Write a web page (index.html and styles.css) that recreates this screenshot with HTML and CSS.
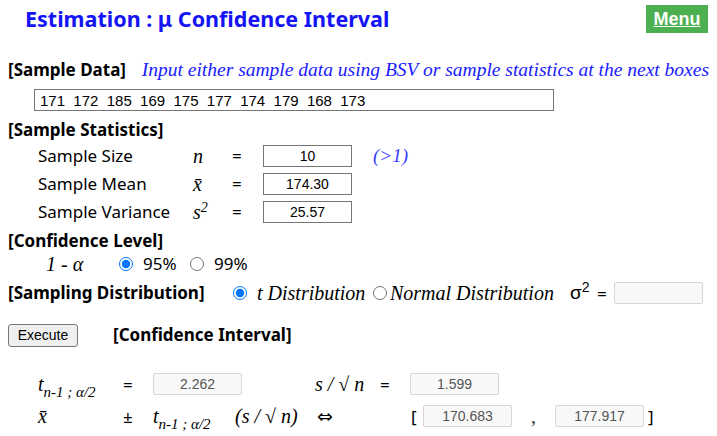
FILE: index.html
```html
<!DOCTYPE html>
<html>
<head>
<meta charset="utf-8">
<link rel="stylesheet" href="styles.css">
</head>
<body>
<div class="top">
  <h1 class="title">Estimation : μ Confidence Interval</h1>
  <a class="menu" href="#">Menu</a>
</div>

<div class="head-row">
  <span class="sec w-data">[Sample Data]</span>
  <span class="note">Input either sample data using BSV or sample statistics at the next boxes</span>
</div>
<div class="data-row">
  <input class="data" type="text" value="171  172  185  169  175  177  174  179  168  173">
</div>

<div class="sec sec-stats">[Sample Statistics]</div>
<div class="stats">
  <span class="lbl">Sample Size</span><span class="sym">n</span><span class="eq">=</span><input class="box" type="text" value="10"><span class="hint">(&gt;1)</span>
  <span class="lbl">Sample Mean</span><span class="sym">x̄</span><span class="eq">=</span><input class="box" type="text" value="174.30"><span></span>
  <span class="lbl">Sample Variance</span><span class="sym">s<sup>2</sup></span><span class="eq">=</span><input class="box" type="text" value="25.57"><span></span>
</div>

<div class="sec sec-conf">[Confidence Level]</div>
<div class="conf">
  <span class="sym alpha">1 - α</span>
  <label class="opt o95"><input type="radio" name="cl" checked>95%</label>
  <label class="opt"><input type="radio" name="cl">99%</label>
</div>

<div class="dist">
  <span class="sec w-dist">[Sampling Distribution]</span>
  <label class="dopt d1"><input type="radio" name="sd" checked><i>t Distribution</i></label>
  <label class="dopt d2"><input type="radio" name="sd"><i>Normal Distribution</i></label>
  <span class="sigma">σ<sup>2</sup></span><span class="eq2">=</span>
  <input class="box ro" type="text" value="">
</div>

<div class="exec">
  <button class="btn" type="button">Execute</button>
  <span class="sec">[Confidence Interval]</span>
</div>

<div class="res r1">
  <span class="c1 sym">t<sub>n-1 ; α/2</sub></span>
  <span class="c2">=</span>
  <input class="box ro" type="text" value="2.262">
  <span class="c4 sym">s / √ n</span>
  <span class="c5">=</span>
  <input class="box ro" type="text" value="1.599">
</div>
<div class="res r2">
  <span class="c1 sym">x̄</span>
  <span class="c2">±</span>
  <span class="c3 sym">t<sub>n-1 ; α/2</sub></span>
  <span class="c6 sym">(s / √ n)</span>
  <span class="c7">⇔</span>
  <span class="lb">[</span>
  <input class="box ro" type="text" value="170.683">
  <span class="comma">,</span>
  <input class="box ro" type="text" value="177.917">
  <span class="rb">]</span>
</div>
</body>
</html>
```

FILE: styles.css
```css
html, body { margin: 0; padding: 0; }
body {
  width: 717px;
  height: 436px;
  overflow: hidden;
  background: #fff;
  color: #000;
  font-family: "Noto Sans", "Liberation Sans", sans-serif;
  font-size: 17px;
  padding: 0 8px;
  box-sizing: border-box;
}
input[type=radio] {
  margin: 0 6px 0 0;
  width: 14px;
  height: 14px;
  accent-color: #0075ff;
  flex: none;
}
.top {
  display: flex;
  justify-content: space-between;
  align-items: flex-start;
  height: 52px;
}
.title {
  margin: 4px 0 0 17px;
  font-size: 21.5px;
  font-weight: bold;
  color: #1414f5;
  line-height: 30px;
}
.menu {
  margin-top: 5px;
  margin-right: 1px;
  width: 62px;
  height: 28px;
  background: #4caf50;
  color: #fff;
  font-family: "Liberation Sans", Arial, sans-serif;
  font-weight: bold;
  font-size: 18px;
  line-height: 28px;
  text-align: center;
  text-decoration: underline;
}
.sec {
  font-weight: bold;
  font-size: 17px;
  line-height: 22px;
  white-space: nowrap;
}
.head-row {
  display: flex;
  align-items: center;
  height: 36px;
}
.w-data { width: 134px; }
.note {
  font-family: "Liberation Serif", "Times New Roman", serif;
  font-style: italic;
  font-size: 19.5px;
  color: #1a1aff;
  white-space: nowrap;
}
.data-row {
  padding-left: 26px;
  height: 29px;
}
.data {
  display: block;
  width: 520px;
  height: 22px;
  box-sizing: border-box;
  border: 1px solid #767676;
  font-family: "Liberation Sans", Arial, sans-serif;
  font-size: 15px;
  padding: 0 5px;
  color: #000;
  margin: 1px 0 0;
}
.sec-stats { display: block; height: 24px; line-height: 24px; }
.stats {
  display: grid;
  grid-template-columns: 155px 39px 31px 89px auto;
  grid-auto-rows: 28px;
  align-items: center;
  padding-left: 30px;
}
.lbl { font-size: 17px; line-height: 22px; }
.sym {
  font-family: "Liberation Serif", "Times New Roman", serif;
  font-style: italic;
  font-size: 20px;
  line-height: 22px;
}
.sym sup, .sigma sup { font-size: 14px; vertical-align: 7px; line-height: 0; }
.eq { font-size: 17px; line-height: 22px; }
.box {
  display: block;
  width: 89px;
  height: 22px;
  box-sizing: border-box;
  border: 1px solid #767676;
  text-align: center;
  font-family: "Liberation Sans", Arial, sans-serif;
  font-size: 14px;
  color: #000;
  padding: 0 2px;
  margin: 0;
  flex: none;
}
.hint {
  margin-left: 21px;
  font-family: "Liberation Serif", "Times New Roman", serif;
  font-style: italic;
  font-size: 19px;
  line-height: 22px;
  color: #3838ff;
}
.sec-conf { display: block; height: 24px; line-height: 24px; margin-top: 3px; }
.conf {
  display: flex;
  align-items: center;
  height: 22px;
  padding-left: 38px;
}
.alpha { width: 73px; }
.opt { display: flex; align-items: center; font-size: 17px; line-height: 22px; }
.opt input { margin-right: 10px; }
.o95 { width: 71px; }
.dist {
  display: flex;
  align-items: center;
  height: 36px;
}
.w-dist { width: 225px; }
.dopt {
  display: flex;
  align-items: center;
  font-family: "Liberation Serif", "Times New Roman", serif;
  font-size: 20px;
  line-height: 22px;
  white-space: nowrap;
}
.d1 { width: 140px; }
.d1 input { margin-right: 10px; }
.d2 { width: 197px; }
.d2 input { margin-right: 3px; }
.sigma {
  font-family: "Liberation Sans", Arial, sans-serif;
  font-size: 19px;
  line-height: 22px;
  width: 27px;
}
.eq2 { width: 17px; font-size: 17px; }
.ro {
  background: #f8f8f8;
  border: 1px solid #d6d6d6;
  border-radius: 2px;
  color: #555;
}
.exec {
  display: flex;
  align-items: center;
  margin-top: 12px;
  height: 24px;
}
.btn {
  width: 70px;
  height: 23px;
  font-family: "Liberation Sans", Arial, sans-serif;
  font-size: 14px;
  background: #efefef;
  border: 1px solid #767676;
  border-radius: 3px;
  padding: 0;
  margin-right: 35px;
}
.res {
  display: flex;
  align-items: center;
  height: 32px;
  padding-left: 30px;
  white-space: nowrap;
}
.r1 { margin-top: 21px; }
.res .c1 { width: 85px; }
.res .c2 { width: 30px; font-size: 17px; }
.res .c4 { width: 65px; margin-left: 73px; }
.res .c5 { width: 30px; font-size: 17px; }
.res .c3 { width: 82px; }
.res .c6 { width: 82px; }
.res .c7 { width: 94px; font-family: "DejaVu Sans", sans-serif; font-size: 19px; line-height: 22px; }
.res sub { font-size: 15px; vertical-align: -6px; line-height: 0; }
.lb { width: 12px; color: #000; font-family: "Noto Sans", sans-serif; font-size: 17px; }
.comma { width: 43px; text-align: center; color: #333; font-family: "Liberation Serif", serif; font-size: 20px; }
.rb { margin-left: 4px; color: #000; font-family: "Noto Sans", sans-serif; font-size: 17px; }
```
